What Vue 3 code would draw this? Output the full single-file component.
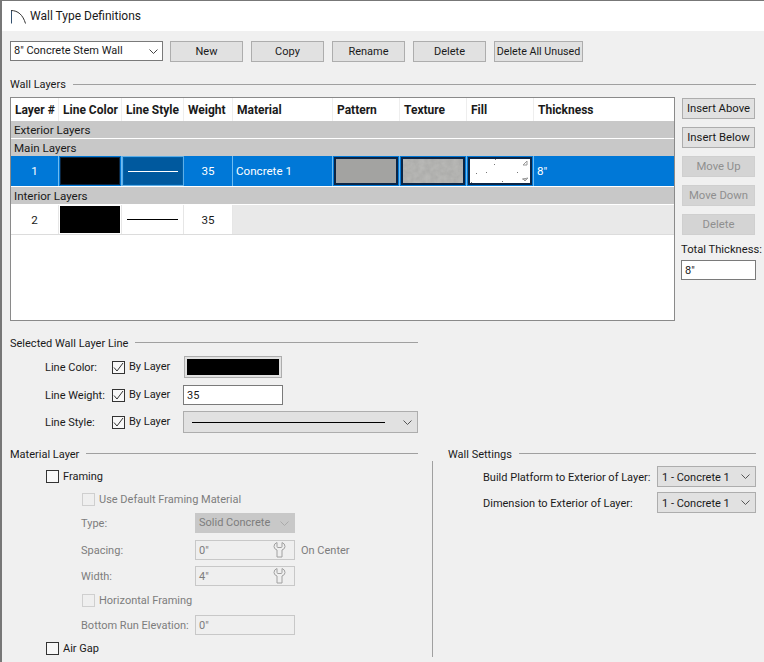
<template>
  <div class="window">
    <header class="titlebar">
      <svg class="arch" width="16" height="16" viewBox="0 0 16 16"><path d="M1.5 14.5V1.5" stroke="#33506e" fill="none"/><path d="M1 1.5C8 1.5 13 6 15.5 14.5" stroke="#333" fill="none"/></svg>
      <span>Wall Type Definitions</span>
    </header>
    <main class="body">
      <div class="toolbar">
        <div class="select type-select"><span>8" Concrete Stem Wall</span><svg class="chev" width="9" height="5" viewBox="0 0 9 5"><path d="M.5.5l4 4 4-4" fill="none" stroke="#444"/></svg></div>
        <button v-for="b in toolbar" :key="b" class="btn" :class="{ wide: b.length > 8 }">{{ b }}</button>
      </div>

      <div class="legend wall-legend"><span>Wall Layers</span><i></i></div>
      <div class="layers">
        <div class="table">
          <div class="row head"><div v-for="c in cols" :key="c" class="cell">{{ c }}</div></div>
          <div class="section">Exterior Layers</div>
          <div class="section gap">Main Layers</div>
          <div class="row data selected">
            <div class="cell num">1</div>
            <div class="cell swatchcell"><div class="black"></div></div>
            <div class="cell stylecell active"><div class="rule"></div></div>
            <div class="cell num">35</div>
            <div class="cell">Concrete 1</div>
            <div class="cell swatchcell"><div class="tile pattern"></div></div>
            <div class="cell swatchcell"><div class="tile texture">
              <svg width="62" height="24"><filter id="spk"><feTurbulence type="fractalNoise" baseFrequency="0.18" numOctaves="3" seed="4"/><feColorMatrix values="0 0 0 0 .6  0 0 0 0 .6  0 0 0 0 .58  .55 0 0 0 0"/></filter><rect width="62" height="24" filter="url(#spk)"/></svg>
            </div></div>
            <div class="cell swatchcell"><div class="tile fill">
              <svg width="62" height="24" viewBox="0 0 62 24"><path d="M57 2l-4 4h4zM58 19l-5 1 2 2 3-3M52 20h4" fill="none" stroke="#999"/><g fill="#777"><rect x="24" y="5" width="1" height="1"/><rect x="6" y="14" width="1" height="1"/><rect x="16" y="13" width="1" height="1"/><rect x="47" y="13" width="1" height="1"/><rect x="32" y="22" width="1" height="1"/><rect x="1" y="23" width="1" height="1"/><rect x="25" y="0" width="1" height="1"/></g></svg>
            </div></div>
            <div class="cell">8"</div>
          </div>
          <div class="section inner">Interior Layers</div>
          <div class="row data plain">
            <div class="cell num">2</div>
            <div class="cell swatchcell"><div class="black"></div></div>
            <div class="cell stylecell"><div class="rule"></div></div>
            <div class="cell num">35</div>
            <div class="rest"></div>
          </div>
        </div>
        <aside class="side">
          <button v-for="b in sideBtns" :key="b.t" class="btn" :disabled="b.off">{{ b.t }}</button>
          <label class="total">Total Thickness:</label>
          <div class="input total-input">8"</div>
        </aside>
      </div>

      <div class="legend line-legend"><span>Selected Wall Layer Line</span><i></i></div>
      <div class="line-grid">
        <div class="lrow r1"><span class="lbl">Line Color:</span><span class="check on"><svg width="11" height="11" viewBox="0 0 11 11"><path d="M1 5.5l3 3.5 6-8" fill="none" stroke="#333"/></svg></span><span class="by">By Layer</span><div class="colorbtn"><div></div></div></div>
        <div class="lrow r2"><span class="lbl">Line Weight:</span><span class="check on"><svg width="11" height="11" viewBox="0 0 11 11"><path d="M1 5.5l3 3.5 6-8" fill="none" stroke="#333"/></svg></span><span class="by">By Layer</span><div class="input weight">35</div></div>
        <div class="lrow r3"><span class="lbl">Line Style:</span><span class="check on"><svg width="11" height="11" viewBox="0 0 11 11"><path d="M1 5.5l3 3.5 6-8" fill="none" stroke="#333"/></svg></span><span class="by">By Layer</span><div class="select stylesel"><div class="rule dark"></div><svg class="chev" width="9" height="5" viewBox="0 0 9 5"><path d="M.5.5l4 4 4-4" fill="none" stroke="#555"/></svg></div></div>
      </div>

      <div class="columns">
        <section class="material">
          <div class="legend"><span>Material Layer</span><i></i></div>
          <div class="chk framing"><span class="check"></span><span class="cap">Framing</span></div>
          <div class="disabled">
            <div class="chk usedef"><span class="check off"></span><span class="cap">Use Default Framing Material</span></div>
            <div class="frow r-type"><span class="flbl">Type:</span><div class="select dis"><span>Solid Concrete</span><svg class="chev" width="9" height="5" viewBox="0 0 9 5"><path d="M.5.5l4 4 4-4" fill="none" stroke="#aaa"/></svg></div></div>
            <div class="frow r-space"><span class="flbl">Spacing:</span><div class="input dis">0"<svg class="wrench" width="13" height="16" viewBox="0 0 13 16"><path d="M4 .5V4.5q0 1 1 1H8q1 0 1-1V.5q3 1 3 4 0 2.5-3 3.5v7H4V8Q1 7 1 4.5 1 1.5 4 .5Z" fill="none" stroke="#a0a0a0"/></svg></div><span class="oncenter">On Center</span></div>
            <div class="frow r-width"><span class="flbl">Width:</span><div class="input dis">4"<svg class="wrench" width="13" height="16" viewBox="0 0 13 16"><path d="M4 .5V4.5q0 1 1 1H8q1 0 1-1V.5q3 1 3 4 0 2.5-3 3.5v7H4V8Q1 7 1 4.5 1 1.5 4 .5Z" fill="none" stroke="#a0a0a0"/></svg></div></div>
            <div class="chk horiz"><span class="check off"></span><span class="cap">Horizontal Framing</span></div>
            <div class="frow r-bottom"><span class="flbl">Bottom Run Elevation:</span><div class="input dis">0"</div></div>
          </div>
          <div class="chk airgap"><span class="check"></span><span class="cap">Air Gap</span></div>
        </section>
        <section class="settings">
          <div class="legend"><span>Wall Settings</span><i></i></div>
          <div class="settings-box">
            <div class="srow first"><span class="cap">Build Platform to Exterior of Layer:</span><div class="select ssel"><span>1 - Concrete 1</span><svg class="chev" width="9" height="5" viewBox="0 0 9 5"><path d="M.5.5l4 4 4-4" fill="none" stroke="#555"/></svg></div></div>
            <div class="srow"><span class="cap">Dimension to Exterior of Layer:</span><div class="select ssel"><span>1 - Concrete 1</span><svg class="chev" width="9" height="5" viewBox="0 0 9 5"><path d="M.5.5l4 4 4-4" fill="none" stroke="#555"/></svg></div></div>
          </div>
        </section>
      </div>
    </main>
  </div>
</template>

<script setup>
const toolbar = ['New', 'Copy', 'Rename', 'Delete', 'Delete All Unused']
const cols = ['Layer #', 'Line Color', 'Line Style', 'Weight', 'Material', 'Pattern', 'Texture', 'Fill', 'Thickness']
const sideBtns = [
  { t: 'Insert Above' }, { t: 'Insert Below' },
  { t: 'Move Up', off: true }, { t: 'Move Down', off: true }, { t: 'Delete', off: true },
]
</script>

<style>
html, body { margin: 0; background: #f0f0f0; }
</style>

<style scoped>
* { box-sizing: border-box; }
.window {
  width: 764px; height: 662px; overflow: hidden; position: relative;
  background: #f0f0f0; color: #1a1a1a;
  border-top: 1px solid #777; border-left: 2px solid #777;
  font: 11px/16px Roboto, "Noto Sans", sans-serif;
}
.titlebar { height: 30px; background: #fff; display: flex; align-items: center; padding-left: 8px; gap: 4px; font-size: 12px; }
.arch { margin-top: 1px; }
.body { padding: 10px 8px 0 8px; }

.toolbar { display: flex; gap: 8px; height: 21px; }
.select { display: flex; align-items: center; justify-content: space-between; position: relative; white-space: nowrap; }
.type-select { width: 153px; background: #fff; border: 1px solid #7a7a7a; padding: 0 4px 0 3px; margin-right: -1px; height: 20px; }
.btn {
  width: 73px; height: 21px; padding: 1px 0 0; font: inherit; color: #1a1a1a;
  background: #e1e1e1; border: 1px solid #adadad; white-space: nowrap;
}
.btn.wide { width: 89px; font-size: 10.7px; }
.btn:disabled { color: #8f8f8f; background: #d4d4d4; border-color: #cfcfcf; }

.legend { display: flex; align-items: center; gap: 7px; height: 16px; }
.legend span { padding-top: 2px; }
.legend i { flex: 1; height: 1px; background: #a0a0a0; margin-top: -2px; }
.wall-legend { margin-top: 15px; }
.wall-legend span { padding-top: 0; }

.layers { display: flex; margin-top: 4px; }
.table { width: 665px; height: 224px; background: #fff; border: 1px solid #8a8a8a; flex: none; font-size: 11.6px; }
.row { display: grid; grid-template-columns: 48px 63px 62px 49px 100px 67px 67px 67px 1fr; grid-template-rows: minmax(0, 1fr); }
.head { height: 23px; font-weight: 700; font-size: 12px; }
.head .cell { border-right: 1px solid #eee; padding-left: 4px; line-height: 25px; white-space: nowrap; }
.head .cell:last-child { border-right: 0; }
.section { height: 17px; background: #c8c8c8; padding-left: 3px; line-height: 18px; }
.section.gap { margin-top: 1px; }
.section.inner { margin-top: 1px; }
.data .cell { display: flex; align-items: center; padding-left: 3px; white-space: nowrap; min-height: 0; }
.data .num { justify-content: center; padding-left: 0; }
.selected { height: 30px; background: #0078d7; color: #fff; }
.selected .cell { border-right: 1px solid #6ebcf2; }
.selected .cell:last-child { border-right: 0; }
.plain { background: #fff; border-bottom: 1px solid #dcdcdc; height: 30px; margin-top: 1px; }
.plain .cell { border-right: 1px solid #e6e6e6; }
.plain .rest { background: #e9e9e9; grid-column: 5 / -1; }
.data .swatchcell { padding: 1px; align-items: stretch; }
.black { flex: 1; background: #000; }
.selected .black { border: 1px solid #0a2540; }
.data .stylecell { padding: 0 5px; }
.selected .stylecell.active { background: #00599e; border: 1px solid #5eaee6; box-shadow: inset 0 0 0 1px #0062ac; }
.rule { flex: 1; height: 1px; background: #000; }
.active .rule { background: #fff; }
.tile { flex: 1; border: 2px solid #0b2545; overflow: hidden; min-width: 0; }
.pattern { background: #a3a3a1; }
.texture { background: #a9a9a7; }
.texture svg, .fill svg { display: block; }
.fill { background: #fff; }

.side { margin-left: 6px; width: 75px; display: flex; flex-direction: column; align-items: center; padding-top: 1px; gap: 8px; }
.side .btn { width: 73px; font-size: 11.3px; }
.total { width: 75px; white-space: nowrap; height: 14px; line-height: 16px; margin-top: -1px; font-size: 11.2px; }
.input { background: #fff; border: 1px solid #7a7a7a; padding: 1px 0 0 3px; display: flex; align-items: center; position: relative; }
.total-input { width: 75px; height: 20px; margin-top: -4px; }

.line-legend { width: 408px; margin-top: 14px; }
.line-grid { width: 408px; }
.lrow { display: flex; align-items: center; padding-left: 35px; }
.lbl { width: 67px; flex: none; white-space: nowrap; padding-top: 2px; }
.by { margin-left: 4px; width: 55px; flex: none; }
.r1 { margin-top: 5px; height: 22px; }
.r2 { margin-top: 7px; height: 20px; }
.r3 { margin-top: 6px; height: 22px; }
.check { width: 13px; height: 13px; border: 1px solid #333; flex: none; display: inline-flex; align-items: center; justify-content: center; background: #f8f8f8; }
.check.off { border-color: #cfcfcf; background: #efefef; }
.colorbtn { width: 98px; height: 22px; padding: 2px; border: 1px solid #adadad; background: #e1e1e1; display: flex; }
.colorbtn div { flex: 1; background: #000; }
.weight { width: 100px; height: 20px; margin-left: -1px; }
.stylesel { width: 235px; height: 22px; background: #e1e1e1; border: 1px solid #adadad; margin-left: -1px; padding: 0 5px 0 8px; gap: 18px; }

.columns { display: flex; margin-top: 13px; }
.material { width: 408px; flex: none; height: 207px; }
.chk { display: flex; align-items: center; gap: 4px; height: 14px; }
.cap { padding-top: 2px; }
.framing { margin: 7px 0 0 36px; }
.disabled { color: #7d7d7d; padding-left: 72px; }
.usedef { margin-top: 9px; }
.frow { display: flex; align-items: center; height: 20px; }
.flbl { width: 114px; flex: none; white-space: nowrap; margin-left: -1px; padding-top: 2px; }
.r-type { margin-top: 7px; }
.r-space { margin-top: 7px; }
.r-width { margin-top: 6px; }
.horiz { margin-top: 7px; }
.r-bottom { margin-top: 8px; }
.input.dis { width: 100px; height: 20px; background: #efefef; border-color: #c8c8c8; }
.select.dis { width: 100px; height: 20px; background: #c8c8c8; padding: 0 6px 0 4px; }
.ssel span { padding-top: 2px; }
.wrench { position: absolute; right: 8px; top: 1px; }
.oncenter { margin-left: 6px; padding-top: 1px; }
.airgap { margin: 6px 0 0 36px; }
.settings { margin-left: 30px; width: 308px; flex: none; }
.settings-box { border-left: 1px solid #a0a0a0; margin-left: -16px; margin-top: -1px; height: 196px; padding: 5px 0 0 50px; }
.srow { display: flex; justify-content: space-between; align-items: center; height: 21px; margin-bottom: 5px; white-space: nowrap; }
.ssel { width: 99px; height: 21px; background: #e1e1e1; border: 1px solid #adadad; padding: 0 5px 0 4px; }
</style>
